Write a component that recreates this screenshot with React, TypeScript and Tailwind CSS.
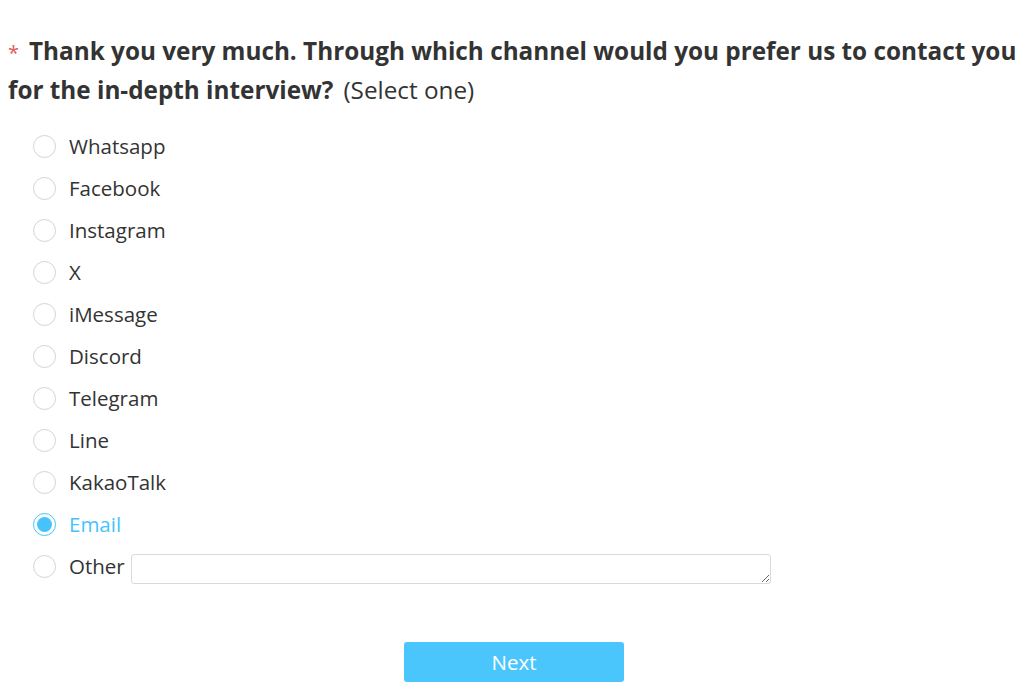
import { useState } from "react";

const options = [
  "Whatsapp",
  "Facebook",
  "Instagram",
  "X",
  "iMessage",
  "Discord",
  "Telegram",
  "Line",
  "KakaoTalk",
  "Email",
  "Other",
];

export default function App() {
  const [selected, setSelected] = useState("Email");

  return (
    <div className="min-h-screen bg-white px-2 pt-[31px] text-[#333] font-['Open_Sans',sans-serif]">
      <div className="text-[24.3px] leading-[39px]">
        <span className="mr-[10px] text-[20px] leading-none text-[#e05a5a] font-normal">*</span>
        <span className="font-bold">
          Thank you very much. Through which channel would you prefer us to contact you for
          the in-depth interview?
        </span>
        <span className="ml-[10px]">(Select one)</span>
      </div>

      <div className="mt-[16px] flex flex-col pl-[25px]">
        {options.map((opt) => {
          const active = selected === opt;
          return (
            <label
              key={opt}
              className="flex h-[42px] cursor-pointer items-center"
              onClick={() => setSelected(opt)}
            >
              <span
                className={
                  active
                    ? "flex h-[23px] w-[23px] items-center justify-center rounded-full border border-[#47c3fb] bg-white"
                    : "h-[23px] w-[23px] rounded-full border border-[#d4d4d4] bg-white"
                }
              >
                {active && <span className="h-[15px] w-[15px] rounded-full bg-[#47c3fb]" />}
              </span>
              <span
                className={
                  active
                    ? "ml-[13px] text-[20.5px] text-[#47c3fb]"
                    : "ml-[13px] text-[20.5px] text-[#333]"
                }
              >
                {opt}
              </span>
              {opt === "Other" && (
                <textarea
                  rows={1}
                  className="ml-[6px] mt-[6px] h-[30px] w-[640px] rounded-[3px] border border-[#d9d9d9] outline-none"
                />
              )}
            </label>
          );
        })}
      </div>

      <div className="mt-[55px] flex justify-center pr-[6px]">
        <button className="h-[40px] w-[220px] rounded-[3px] bg-[#4bc6fd] text-[20.5px] text-white">
          Next
        </button>
      </div>
    </div>
  );
}
